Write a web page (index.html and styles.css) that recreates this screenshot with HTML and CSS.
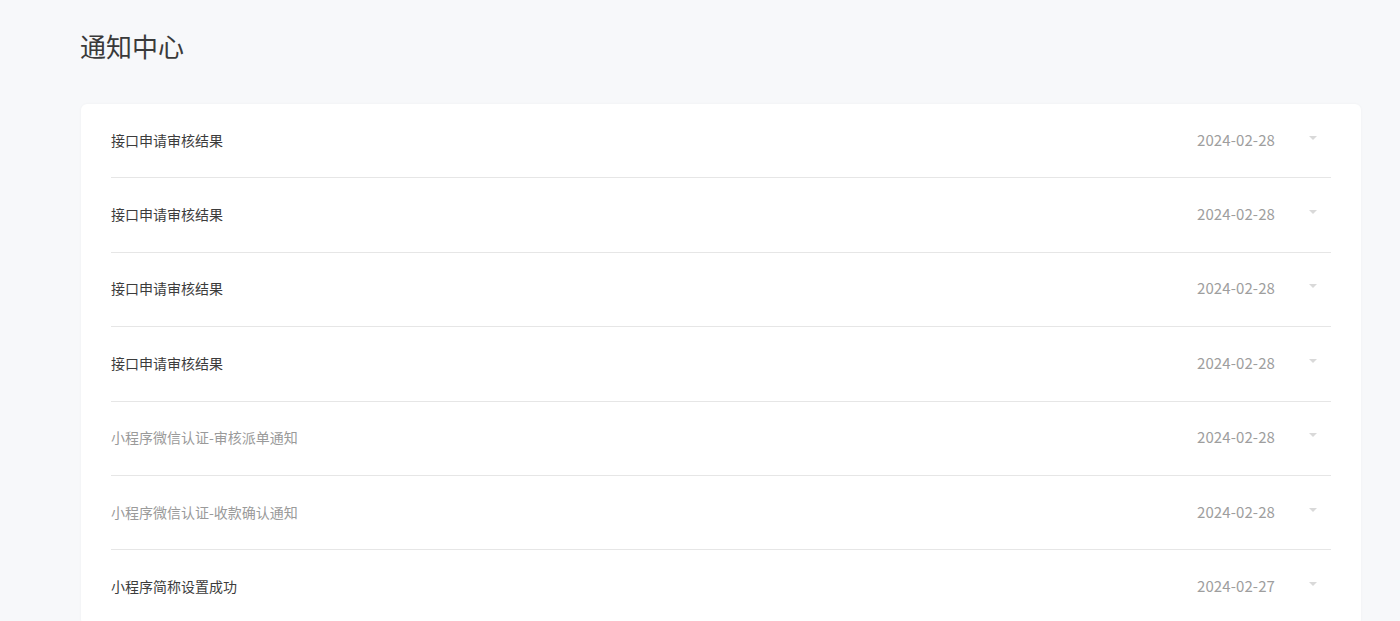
FILE: index.html
```html
<!DOCTYPE html>
<html lang="zh">
<head>
<meta charset="utf-8">
<title>通知中心</title>
<link rel="stylesheet" href="styles.css">
</head>
<body>
<main class="page">
  <h1 class="title">通知中心</h1>
  <section class="card">
    <div class="row"><span class="name">接口申请审核结果</span><span class="date">2024-02-28</span><span class="caret"></span></div>
    <div class="row"><span class="name">接口申请审核结果</span><span class="date">2024-02-28</span><span class="caret"></span></div>
    <div class="row"><span class="name">接口申请审核结果</span><span class="date">2024-02-28</span><span class="caret"></span></div>
    <div class="row"><span class="name">接口申请审核结果</span><span class="date">2024-02-28</span><span class="caret"></span></div>
    <div class="row read"><span class="name">小程序微信认证-审核派单通知</span><span class="date">2024-02-28</span><span class="caret"></span></div>
    <div class="row read"><span class="name">小程序微信认证-收款确认通知</span><span class="date">2024-02-28</span><span class="caret"></span></div>
    <div class="row"><span class="name">小程序简称设置成功</span><span class="date">2024-02-27</span><span class="caret"></span></div>
  </section>
</main>
</body>
</html>
```
FILE: styles.css
```css
html, body {
  margin: 0;
  padding: 0;
  background: #f7f8fa;
  font-family: "Noto Sans CJK SC", "Noto Sans", sans-serif;
  color: #333;
  height: 621px;
  overflow: hidden;
}
.page {
  padding: 0 39px 0 81px;
}
.title {
  margin: 0;
  padding: 28px 0 0 0;
  margin-left: -1px;
  font-size: 26px;
  font-weight: 400;
  line-height: 36px;
  height: 76px;
  color: #3a3a3a;
}
.card {
  background: #fff;
  border-radius: 6px;
  box-shadow: 0 0 3px rgba(0, 0, 0, 0.04);
  padding: 0 30px;
}
.row {
  display: flex;
  align-items: center;
  height: 71.4px;
  padding-bottom: 2px;
  border-bottom: 1px solid #e6e6e6;
}
.name {
  flex: 1;
  font-size: 14px;
  color: #3c3c3c;
  line-height: 20px;
}
.row.read .name {
  color: #9a9a9a;
}
.date {
  font-size: 15px;
  color: #9e9e9e;
  line-height: 20px;
  letter-spacing: 0.1px;
}
.caret {
  width: 0;
  height: 0;
  border-left: 4px solid transparent;
  border-right: 4px solid transparent;
  border-top: 4px solid #d9d9d9;
  margin: 0 14px 4px 34px;
}
```
